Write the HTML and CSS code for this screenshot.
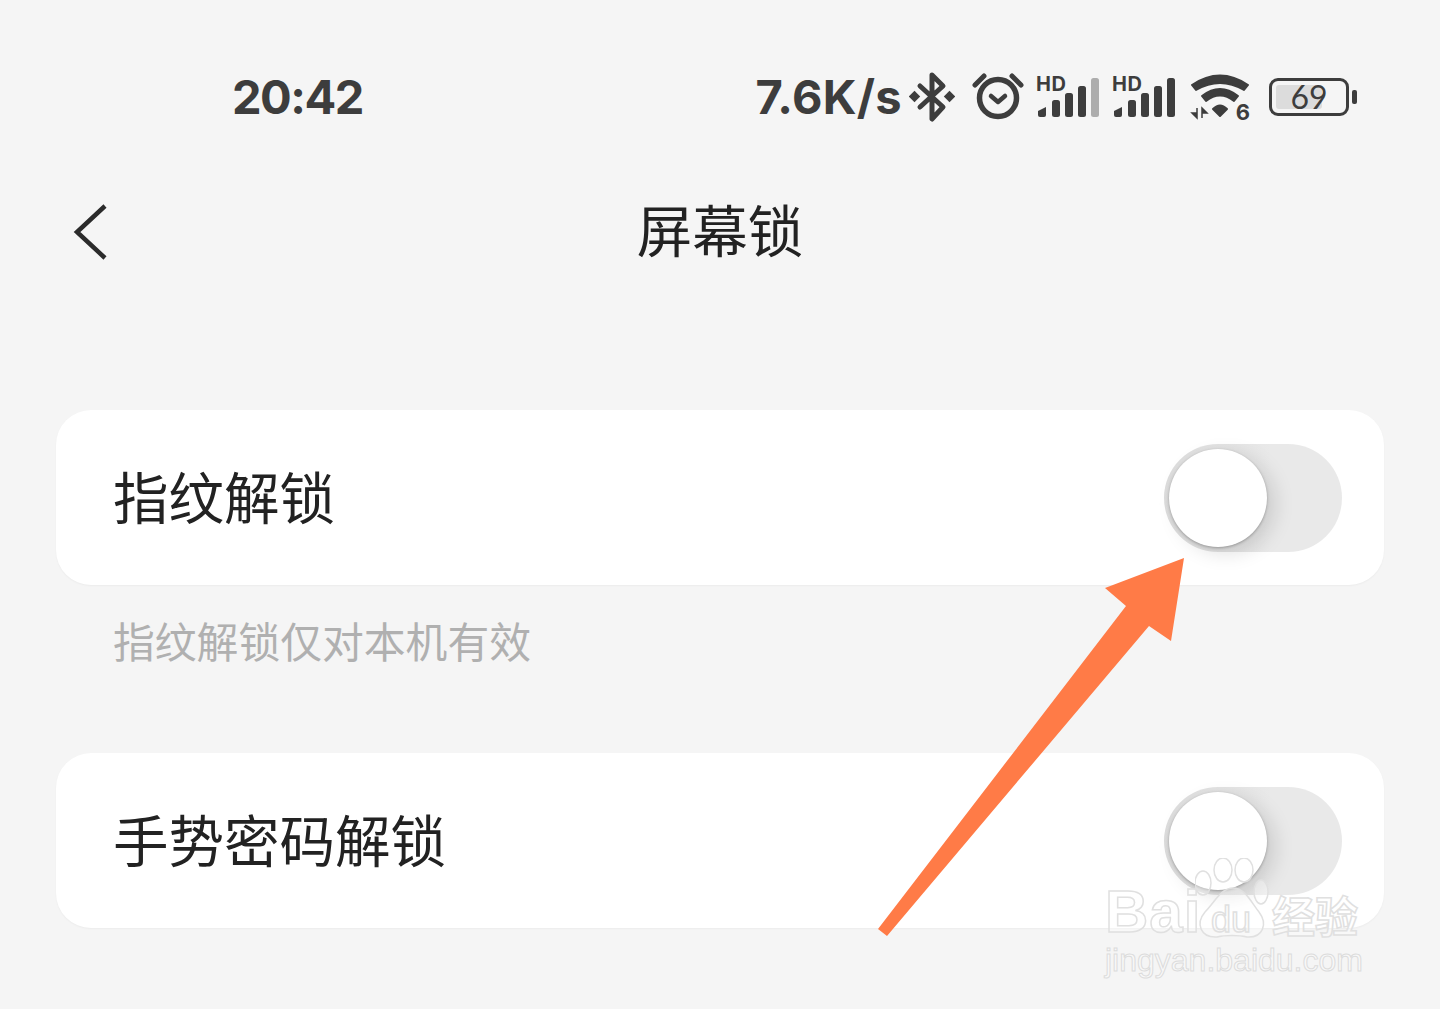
FILE: index.html
```html
<!DOCTYPE html>
<html lang="zh-CN">
<head>
    <meta charset="UTF-8">
    <title>屏幕锁</title>
    <link rel="stylesheet" href="styles.css">
</head>
<body>
    <div class="page">
        <div class="statusBar">
            <span class="time">20:42</span>
            <div class="statusRight">
                <span class="speed">7.6K/s</span>
                <svg class="icon" width="46" height="52" viewBox="0 0 46 52">
                    <path d="M11 15 L34 36 L23 48 V4 L34 15 L11 36" fill="none" stroke="#3d3d3d" stroke-width="5" stroke-linecap="round" stroke-linejoin="round"/>
                    <rect x="1.5" y="21.5" width="8" height="8" transform="rotate(45 5.5 25.5)" fill="#3d3d3d"/>
                    <rect x="36.5" y="21.5" width="8" height="8" transform="rotate(45 40.5 25.5)" fill="#3d3d3d"/>
                </svg>
                <svg class="icon alarm" width="52" height="48" viewBox="0 0 52 48">
                    <circle cx="26" cy="26" r="18.5" fill="none" stroke="#3d3d3d" stroke-width="5.5"/>
                    <path d="M19 24 L26 30 L33 24" fill="none" stroke="#3d3d3d" stroke-width="4.5" stroke-linecap="round" stroke-linejoin="round"/>
                    <path d="M3 13 L12 4 M49 13 L40 4" stroke="#3d3d3d" stroke-width="5" stroke-linecap="round"/>
                </svg>
                <div class="signal">
                    <span class="hd">HD</span>
                    <svg width="62" height="39" viewBox="0 0 62 39">
                        <path d="M3 39 Q1 39 1 37 V33 L9 29 V37 Q9 39 7 39 Z" fill="#3d3d3d"/>
                        <rect x="15" y="22" width="8" height="17" rx="2.5" fill="#3d3d3d"/>
                        <rect x="28" y="15" width="8" height="24" rx="2.5" fill="#3d3d3d"/>
                        <rect x="41" y="8" width="8" height="31" rx="2.5" fill="#3d3d3d"/>
                        <rect x="54" y="0" width="8" height="39" rx="2.5" fill="#adadad"/>
                    </svg>
                </div>
                <div class="signal">
                    <span class="hd">HD</span>
                    <svg width="62" height="39" viewBox="0 0 62 39">
                        <path d="M3 39 Q1 39 1 37 V33 L9 29 V37 Q9 39 7 39 Z" fill="#3d3d3d"/>
                        <rect x="15" y="22" width="8" height="17" rx="2.5" fill="#3d3d3d"/>
                        <rect x="28" y="15" width="8" height="24" rx="2.5" fill="#3d3d3d"/>
                        <rect x="41" y="8" width="8" height="31" rx="2.5" fill="#3d3d3d"/>
                        <rect x="54" y="0" width="8" height="39" rx="2.5" fill="#3d3d3d"/>
                    </svg>
                </div>
                <div class="wifi">
                    <svg width="60" height="46" viewBox="0 0 60 46">
                        <path d="M2 11 Q30 -8 58 11 L54 16 Q30 2 6 16 Z" fill="#3d3d3d" stroke="#3d3d3d" stroke-width="2" stroke-linejoin="round"/>
                        <path d="M12 22 Q30 8 48 22 L44 27 Q30 16 16 27 Z" fill="#3d3d3d" stroke="#3d3d3d" stroke-width="2" stroke-linejoin="round"/>
                        <path d="M23 35 Q30 28 37 35 L30 42 Z" fill="#3d3d3d" stroke="#3d3d3d" stroke-width="2" stroke-linejoin="round"/>
                        <path d="M7 34 V44 L2 39 H7 Z M12 44 V34 L17 39 H12 Z" fill="#3d3d3d" stroke="#3d3d3d" stroke-width="1.5"/>
                    </svg>
                    <span class="wifiNum">6</span>
                </div>
                <div class="battery">
                    <div class="batteryBody">
                        <div class="batteryFill"></div>
                        <span class="batteryNum">69</span>
                    </div>
                    <div class="batteryCap"></div>
                </div>
            </div>
        </div>

        <div class="titleBar">
            <svg class="back" width="36" height="58" viewBox="0 0 36 58">
                <path d="M32 4 L4 30 L32 56" fill="none" stroke="#2b2b2b" stroke-width="4.5"/>
            </svg>
            <h1 class="title">屏幕锁</h1>
        </div>

        <div class="card">
            <span class="cardLabel">指纹解锁</span>
            <div class="switch"><div class="knob"></div></div>
        </div>
        <p class="hint">指纹解锁仅对本机有效</p>
        <div class="card">
            <span class="cardLabel">手势密码解锁</span>
            <div class="switch"><div class="knob"></div></div>
        </div>
    </div>

    <svg class="arrow" width="320" height="390" viewBox="0 0 320 390">
        <path d="M306 2 L293 85 L271 70 L9 380 L0 373 L248 50 L227 32 Z" fill="#ff7b47"/>
    </svg>

    <div class="mark">
        <div class="markTop">
            <span class="markBai">Bai</span>
            <svg class="paw" width="74" height="84" viewBox="0 0 74 84">
                <g fill="rgba(255,255,255,.35)" stroke="#e0e0e0" stroke-width="1.5">
                    <ellipse cx="8" cy="25" rx="8" ry="12"/>
                    <ellipse cx="28" cy="12" rx="9" ry="12"/>
                    <ellipse cx="49" cy="12" rx="9" ry="12"/>
                    <ellipse cx="66" cy="34" rx="7" ry="12"/>
                    <path d="M38 30 C50 30 56 44 64 54 C73 66 68 80 52 79 C44 77 30 77 22 79 C6 80 0 66 10 54 C20 44 26 30 38 30 Z"/>
                </g>
            </svg>
            <span class="markDu">du</span>
            <span class="markCn">经验</span>
        </div>
        <div class="markUrl">jingyan.baidu.com</div>
    </div>
</body>
</html>
```

FILE: styles.css
```css
*{
    margin:0;
    padding:0;
    box-sizing:border-box;
}
html,body{
    height:1009px;
    overflow:hidden;
}
body{
    position:relative;
    background:#f5f5f5;
    font-family:"Noto Sans CJK SC","Noto Sans",sans-serif;
}
.page{
    padding:64px 56px 0 56px;
}
.statusBar{
    display:flex;
    justify-content:space-between;
    align-items:center;
    height:66px;
    padding:0 27px 0 176px;
}
.time{
    font-family:"Inter","Noto Sans",sans-serif;
    font-size:47px;
    line-height:64px;
    font-weight:700;
    letter-spacing:-1.5px;
    color:#3d3d3d;
}
.statusRight{
    display:flex;
    align-items:center;
}
.speed{
    font-family:"Inter","Noto Sans",sans-serif;
    font-size:47px;
    line-height:64px;
    font-weight:700;
    letter-spacing:.3px;
    color:#3d3d3d;
    margin-right:7px;
}
.icon{
    display:block;
}
.alarm{
    margin-left:17px;
    margin-right:12px;
    margin-bottom:2px;
}
.signal{
    position:relative;
    width:62px;
    height:41px;
    margin-right:14px;
    margin-bottom:2px;
}
.signal svg{
    position:absolute;
    left:1px;
    bottom:0;
}
.hd{
    position:absolute;
    left:0;
    top:-3px;
    font-family:"Inter",sans-serif;
    font-size:20px;
    line-height:22px;
    font-weight:700;
    letter-spacing:.5px;
    color:#3d3d3d;
}
.wifi{
    position:relative;
    width:60px;
    height:46px;
    margin-left:2px;
    margin-right:19px;
}
.wifiNum{
    position:absolute;
    right:0;
    bottom:-3px;
    font-family:"Inter",sans-serif;
    font-size:22px;
    line-height:22px;
    font-weight:700;
    color:#3d3d3d;
}
.battery{
    display:flex;
    align-items:center;
}
.batteryBody{
    position:relative;
    width:80px;
    height:38px;
    border:3.5px solid #3d3d3d;
    border-radius:9px;
    text-align:center;
}
.batteryFill{
    position:absolute;
    left:4px;
    top:4px;
    bottom:4px;
    width:46px;
    background:#dcdcdc;
    border-radius:3px;
}
.batteryNum{
    position:relative;
    font-family:"Lato",sans-serif;
    font-size:32px;
    line-height:31px;
    color:#3d3d3d;
}
.batteryCap{
    width:5px;
    height:14px;
    margin-left:3px;
    background:#3d3d3d;
    border-radius:2px;
}
.titleBar{
    position:relative;
    display:flex;
    justify-content:center;
    align-items:center;
    height:70px;
    margin-top:64px;
}
.back{
    position:absolute;
    left:17px;
    top:8px;
}
.title{
    font-size:55.5px;
    font-weight:400;
    color:#222;
    padding-bottom:3px;
}
.card{
    display:flex;
    justify-content:space-between;
    align-items:center;
    height:175px;
    padding:0 42px 0 57px;
    background:#fff;
    border-radius:35px;
    box-shadow:0 1px 2px rgba(0,0,0,.04);
}
.titleBar + .card{
    margin-top:146px;
}
.cardLabel{
    font-size:55.5px;
    color:#222;
    padding-bottom:6px;
}
.switch{
    position:relative;
    width:178px;
    height:108px;
    border-radius:54px;
    background:linear-gradient(90deg,#dcdcdc,#e9e9e9 60%);
}
.knob{
    position:absolute;
    left:5px;
    top:5px;
    width:98px;
    height:98px;
    border-radius:50%;
    background:#fff;
    box-shadow:0 1px 3px rgba(0,0,0,.28),8px 6px 20px rgba(0,0,0,.13);
}
.hint{
    height:168px;
    padding:27px 0 0 57px;
    font-size:41.8px;
    line-height:56px;
    color:#b0b0b0;
}
.arrow{
    position:absolute;
    left:878px;
    top:556px;
}
.mark{
    position:absolute;
    left:1105px;
    top:855px;
    width:262px;
}
.markTop{
    position:relative;
    height:90px;
}
.markBai,.markDu,.markCn{
    position:absolute;
    font-family:"Liberation Sans",sans-serif;
    font-weight:700;
    color:rgba(255,255,255,.35);
    -webkit-text-stroke:1.5px #e0e0e0;
}
.markBai{
    left:0;
    top:25px;
    font-size:60px;
    line-height:64px;
    letter-spacing:1px;
}
.markDu{
    left:106px;
    top:47px;
    font-size:36px;
    line-height:36px;
    font-weight:400;
}
.markCn{
    left:167px;
    top:32px;
    font-family:"Noto Sans CJK SC",sans-serif;
    font-size:43px;
    line-height:54px;
}
.paw{
    position:absolute;
    left:90px;
    top:3px;
}
.markUrl{
    font-family:"Liberation Sans",sans-serif;
    font-size:32px;
    line-height:34px;
    margin-top:-2px;
    color:rgba(255,255,255,.35);
    -webkit-text-stroke:1px #dcdcdc;
}
```
